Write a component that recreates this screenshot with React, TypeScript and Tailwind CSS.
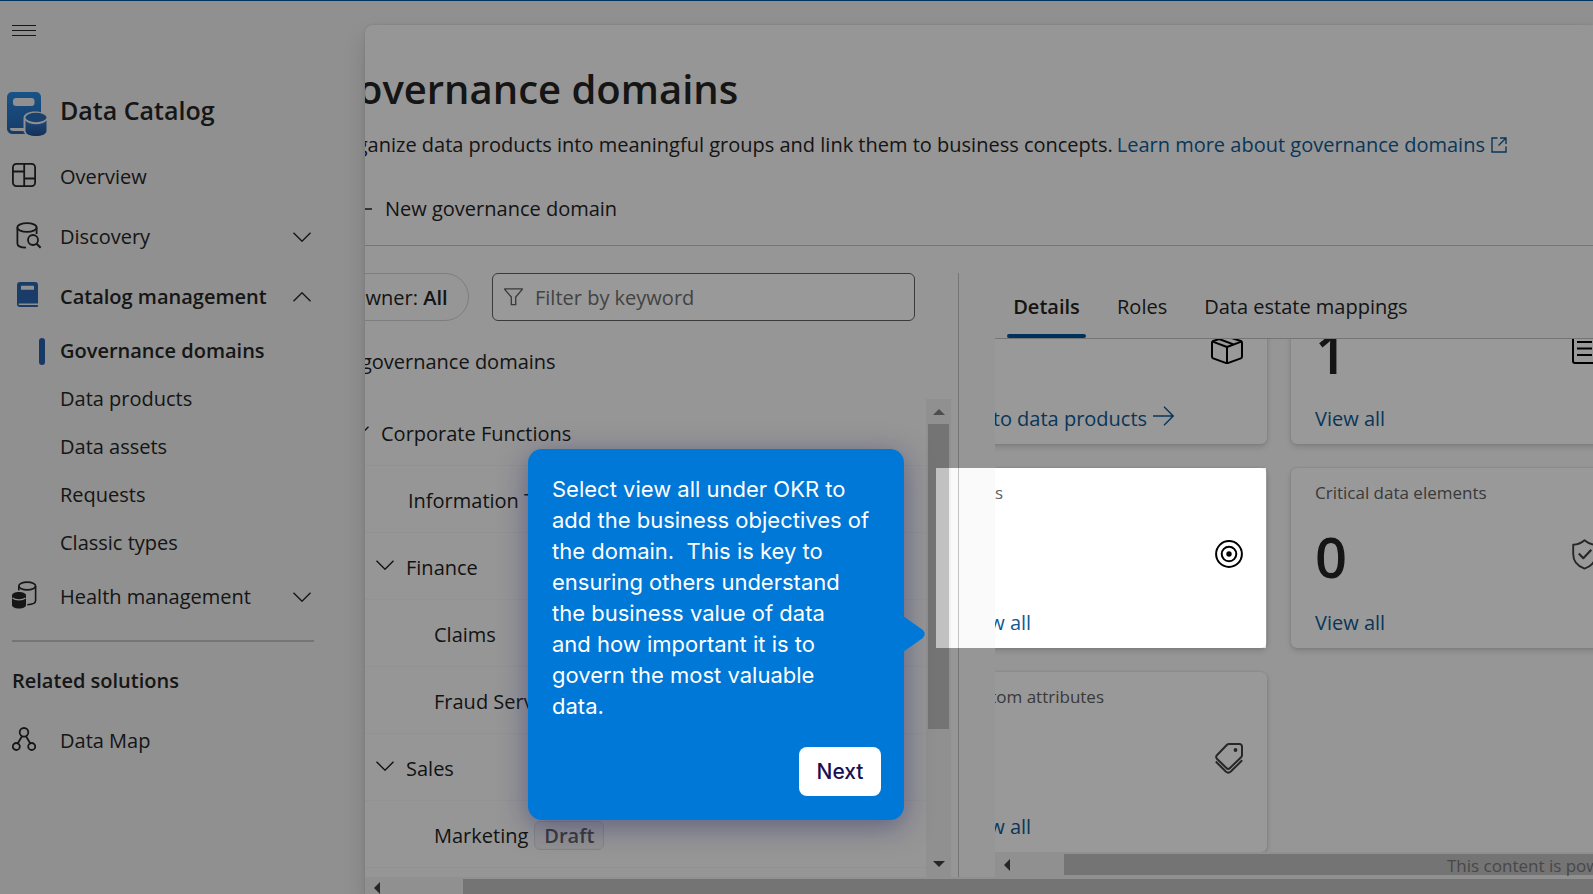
import type { ReactNode } from "react";

const BASE = "text-[20px] leading-7";

function Chevron({ up = false, className = "" }: { up?: boolean; className?: string }) {
  return (
    <svg width="18" height="10" viewBox="0 0 18 10" fill="none" stroke="currentColor" strokeWidth="1.4" className={className} aria-hidden="true">
      <path d={up ? "M0.5 9.3 9 0.8l8.5 8.5" : "M0.5 0.7 9 9.2l8.5-8.5"} />
    </svg>
  );
}

function CatalogLogo() {
  return (
    <svg width="40" height="44" viewBox="0 0 40 44" aria-hidden="true">
      <defs>
        <linearGradient id="book" x1="0" y1="0" x2="0" y2="1">
          <stop offset="0" stopColor="#2a8ae0" />
          <stop offset="1" stopColor="#2765ae" />
        </linearGradient>
        <linearGradient id="drum" x1="0" y1="0" x2="0" y2="1">
          <stop offset="0" stopColor="#3277c8" />
          <stop offset="1" stopColor="#1f5296" />
        </linearGradient>
      </defs>
      <path d="M5 0h24a5 5 0 0 1 5 5v37H6a5.5 5.5 0 0 1-6-6V5a5 5 0 0 1 5-5Z" fill="url(#book)" />
      <path d="M3 36h24v3H6a3 3 0 0 1-3-3Z" fill="#f0f0f0" />
      <rect x="6" y="6" width="21.5" height="8" rx="3" fill="#f0f0f0" />
      <path d="M16.5 26c0-4 5-6.500 11.500-6.500 3 0 5.500.5 7.500 1.300V43H20.500c-2.500-.6-4-2.300-4-4.500Z" fill="#f0f0f0" />
      <ellipse cx="29" cy="25.5" rx="10.5" ry="4.7" fill="#2a6fbd" />
      <path d="M18.5 28.500c2 2.600 6 3.700 10.500 3.700s8.500-1.100 10.500-3.700V39c0 3-4.700 5-10.500 5s-10.500-2-10.500-5Z" fill="url(#drum)" />
    </svg>
  );
}

function OverviewIcon() {
  return (
    <svg width="24" height="24" viewBox="0 0 24 24" fill="none" stroke="currentColor" strokeWidth="1.8" aria-hidden="true">
      <rect x="0.9" y="0.9" width="22.2" height="22.2" rx="3.5" />
      <path d="M12.2 1v22M1 8.500h11.200M12.200 15.500H23" />
    </svg>
  );
}

function DiscoveryIcon() {
  return (
    <svg width="26" height="27" viewBox="0 0 26 27" fill="none" stroke="currentColor" strokeWidth="1.8" aria-hidden="true">
      <ellipse cx="11" cy="5.5" rx="9.6" ry="4.4" />
      <path d="M1.400 5.500v16c0 2.300 3.700 4 8.600 4.200M20.600 5.500v6.500" />
      <circle cx="17" cy="18" r="5" />
      <path d="m20.600 21.700 4 4" strokeWidth="2" />
    </svg>
  );
}

function BookIcon() {
  return (
    <svg width="22" height="26" viewBox="0 0 22 26" aria-hidden="true">
      <path d="M3 0h15a3 3 0 0 1 3 3v18.500H1.800V23H21v1.200A1 1 0 0 1 20 25H3a3 3 0 0 1-3-3V3a3 3 0 0 1 3-3Z" fill="#2a66ae" />
      <rect x="4" y="3.7" width="13" height="4" rx="0.5" fill="#f0f0f0" />
    </svg>
  );
}

function HealthIcon() {
  return (
    <svg width="25" height="28" viewBox="0 0 25 28" fill="none" stroke="currentColor" strokeWidth="1.6" aria-hidden="true">
      <ellipse cx="15.2" cy="5" rx="8.4" ry="3.9" />
      <path d="M6.800 5v4.500M23.600 5v14.500c0 2.500-3 4-8.300 4.200" />
      <path d="M0 14.500C0 12.500 3 11 7 11s7 1.500 7 3.500v9.500c0 2-3 3.500-7 3.500s-7-1.500-7-3.500Z" fill="currentColor" stroke="none" />
      <path d="M.5 17c1.500 1.300 3.700 1.900 6.500 1.900s5-.6 6.500-1.900" stroke="#f0f0f0" strokeWidth="1.2" />
    </svg>
  );
}

function MapIcon() {
  return (
    <svg width="24" height="24" viewBox="0 0 24 24" fill="none" stroke="currentColor" strokeWidth="1.8" aria-hidden="true">
      <circle cx="12" cy="5.3" r="4.3" />
      <circle cx="4.3" cy="19.5" r="3.5" />
      <circle cx="19.7" cy="19.5" r="3.5" />
      <path d="M10 9.200 5.800 16.300M14 9.200l4.200 7.100" />
    </svg>
  );
}

function FunnelIcon() {
  return (
    <svg width="19" height="18" viewBox="0 0 19 18" fill="none" stroke="currentColor" strokeWidth="1.3" className="shrink-0" aria-hidden="true">
      <path d="M.8.8h17.400v.7L11.700 9v7.700H7.300V9L.8 1.500Z" />
    </svg>
  );
}

function TargetIcon() {
  return (
    <svg width="28" height="28" viewBox="0 0 28 28" fill="none" stroke="#000" strokeWidth="2" aria-hidden="true">
      <circle cx="14" cy="14" r="12.9" />
      <circle cx="14" cy="14" r="7.3" />
      <circle cx="14" cy="14" r="2.7" fill="#000" stroke="none" />
    </svg>
  );
}

function BoxIcon() {
  return (
    <svg width="32" height="28" viewBox="0 0 32 28" fill="none" stroke="#000" strokeWidth="2" strokeLinejoin="round" aria-hidden="true">
      <path d="M1 6.800A2 2 0 0 1 2.200 5L14.800.9a4 4 0 0 1 2.400 0L29.800 5A2 2 0 0 1 31 6.800v13.800a2 2 0 0 1-1.200 1.800l-12.400 4.500a4 4 0 0 1-2.800 0L2.200 22.400A2 2 0 0 1 1 20.600Z" />
      <path d="M1.700 5.600 16 11l14.300-5.400M16 11v16M8 3l14.500 5.400" />
    </svg>
  );
}

function ListIcon() {
  return (
    <svg width="25" height="28" viewBox="0 0 25 28" fill="none" stroke="#000" strokeWidth="2" aria-hidden="true">
      <rect x="1" y="1" width="23" height="26" rx="2" />
      <path d="M5 6h15M5 12.500h15M5 19h15" />
    </svg>
  );
}

function ShieldIcon() {
  return (
    <svg width="25" height="31" viewBox="0 0 25 31" fill="none" stroke="currentColor" strokeWidth="1.9" strokeLinejoin="round" aria-hidden="true">
      <path d="M12.500 1.300C9.500 4 5.500 5.700 1.200 5.700V15c0 7 4 12 11.300 14.600C19.800 27 23.800 22 23.800 15V5.700c-4.300 0-8.300-1.700-11.300-4.400Z" />
      <path d="m6.800 14.500 4.500 4.700 8-8.400" strokeWidth="2.2" />
    </svg>
  );
}

function TagIcon() {
  return (
    <svg width="28" height="31" viewBox="0 0 28 31" fill="none" stroke="currentColor" strokeWidth="2" strokeLinejoin="round" aria-hidden="true">
      <path d="M14 1h10.500A2.500 2.500 0 0 1 27 3.500V12a3 3 0 0 1-.9 2.200L15 25a2.600 2.600 0 0 1-3.600 0L1.900 15.700a2.300 2.300 0 0 1 0-3.400L12 1.800A3 3 0 0 1 14 1Z" />
      <path d="M.8 18.500 10.800 28.500a3.700 3.700 0 0 0 5 0L27.200 17.300" />
      <circle cx="20.5" cy="7" r="1.9" fill="currentColor" stroke="none" />
    </svg>
  );
}

function NavRow({ icon, label, bold = false, children }: { icon: ReactNode; label: string; bold?: boolean; children?: ReactNode }) {
  return (
    <a href="#" className="flex h-[60px] items-center pr-[54px]">
      <span className="flex w-[60px] shrink-0 items-center pb-1">{icon}</span>
      <span className={bold ? "flex-1 font-semibold" : "flex-1"}>{label}</span>
      {children}
    </a>
  );
}

function Sidebar() {
  return (
    <nav className="flex w-[365px] shrink-0 flex-col text-[#262626]">
      <button type="button" aria-label="Toggle navigation" className="mt-6 ml-3 flex w-6 flex-col gap-1 self-start">
        <span className="h-px w-full bg-[#262626]" />
        <span className="h-px w-full bg-[#262626]" />
        <span className="h-px w-full bg-[#262626]" />
      </button>
      <div className="mt-10 flex h-[71px] items-center gap-[13px] pt-1 pl-[7px]">
        <CatalogLogo />
        <span className="pb-2 text-[25px] leading-9 font-semibold">Data Catalog</span>
      </div>
      <div className="flex flex-col">
        <NavRow icon={<span className="pl-3"><OverviewIcon /></span>} label="Overview" />
        <NavRow icon={<span className="pl-4"><DiscoveryIcon /></span>} label="Discovery"><Chevron /></NavRow>
        <NavRow bold icon={<span className="pl-[17px]"><BookIcon /></span>} label="Catalog management"><Chevron up /></NavRow>
        {["Governance domains", "Data products", "Data assets", "Requests", "Classic types"].map((label, i) => (
          <a key={label} href="#" className="flex h-12 items-center">
            <span className="flex w-[60px] pl-[39px]">
              {i === 0 && <span className="h-[27px] w-1.5 rounded-full bg-[#2561a8]" />}
            </span>
            <span className={i === 0 ? "font-semibold" : ""}>{label}</span>
          </a>
        ))}
        <NavRow icon={<span className="pl-3"><HealthIcon /></span>} label="Health management"><Chevron /></NavRow>
      </div>
      <hr className="mt-[13px] mr-[51px] ml-3 border-t-2 border-[#c4c4c4]" />
      <h2 className="mt-[25px] ml-3 font-semibold">Related solutions</h2>
      <div className="mt-4">
        <NavRow icon={<span className="pl-3"><MapIcon /></span>} label="Data Map" />
      </div>
    </nav>
  );
}

function TreeRow({ label, pad, chevron = false, badge }: { label: string; pad: string; chevron?: boolean; badge?: string }) {
  return (
    <li className={`flex h-[67px] shrink-0 items-center border-b border-[#f3f3f3] pt-1 ${pad}`}>
      {chevron && <Chevron className="mr-3 mb-1.5" />}
      <span>{label}</span>
      {badge && (
        <span className="mb-0.5 ml-1.5 rounded-md border border-[#dcdce0] bg-[#f2f2f4] px-[9px] leading-[27px] font-semibold text-[#616161]">{badge}</span>
      )}
    </li>
  );
}

function DomainTree() {
  return (
    <section className="flex w-[622px] shrink-0 flex-col">
      <div className="flex shrink-0 items-center justify-between pr-9">
        <button type="button" className="h-12 rounded-full border border-[#d1d1d1] px-5 pt-0.5">
          Owner: <span className="font-semibold">All</span>
        </button>
        <label className="flex h-12 w-[423px] items-center gap-3 rounded-md border border-[#616161] bg-white px-[11px] text-[#616161]">
          <FunnelIcon />
          <input type="text" aria-label="Filter by keyword" placeholder="Filter by keyword" className="w-full min-w-0 bg-transparent pt-0.5 outline-none placeholder:text-[#707070]" />
        </label>
      </div>
      <p className="mt-[27px] shrink-0 pl-1">All governance domains</p>
      <div className="mt-[23px] flex min-h-0 flex-1">
        <ul className="flex min-w-0 flex-1 flex-col overflow-hidden text-[#1f1f1f]">
          <TreeRow chevron pad="pl-[22px]" label="Corporate Functions" />
          <TreeRow pad="pl-[79px]" label="Information Technology" />
          <TreeRow chevron pad="pl-[47px]" label="Finance" />
          <TreeRow pad="pl-[105px]" label="Claims" />
          <TreeRow pad="pl-[105px]" label="Fraud Services" />
          <TreeRow chevron pad="pl-[47px]" label="Sales" />
          <TreeRow pad="pl-[105px]" label="Marketing" badge="Draft" />
        </ul>
        <div className="flex w-[25px] shrink-0 flex-col items-center bg-[#f1f1f1] py-2.5">
          <span className="h-0 w-0 border-x-6 border-b-6 border-x-transparent border-b-[#808080]" />
          <span className="mt-[9px] h-[305px] w-[21px] bg-[#c1c1c1]" />
          <span className="mt-auto h-0 w-0 border-x-6 border-t-6 border-x-transparent border-t-[#404040]" />
        </div>
      </div>
    </section>
  );
}

function Card({ title, value, link, icon, arrow = false }: { title: string; value: string; link: string; icon: ReactNode; arrow?: boolean }) {
  return (
    <article className="flex h-[180px] w-[330px] shrink-0 flex-col rounded-md bg-white px-6 pt-[13px] pb-[11px] shadow-[0_0_3px_rgba(0,0,0,0.12),0_3px_6px_rgba(0,0,0,0.14)]">
      <h3 className="text-[17px] leading-6 text-[#616161]">{title}</h3>
      <div className="flex flex-1 items-center justify-between">
        <span className="pb-0.5 text-[56px] leading-[60px] font-semibold text-[#242424]">{value}</span>
        <span className="pb-1.5 text-[#424242]">{icon}</span>
      </div>
      <a href="#" className="flex items-center gap-1.5 text-[#0f5a94]">
        {link}
        {arrow && (
          <svg width="21" height="20" viewBox="0 0 21 20" fill="none" stroke="currentColor" strokeWidth="1.4" className="mb-1.5" aria-hidden="true">
            <path d="M0 10h20M11 .8l9.200 9.200-9.200 9.200" />
          </svg>
        )}
      </a>
    </article>
  );
}

function DetailsPane() {
  return (
    <section className="ml-9 flex min-w-0 flex-1 flex-col">
      <div role="tablist" className="flex h-[66px] shrink-0 items-stretch gap-[25px] border-b border-[#c4c4c4] pl-3">
        <button type="button" role="tab" aria-selected="true" className="flex flex-col justify-between px-0 pt-5 font-semibold">
          <span className="px-1.5">Details</span>
          <span className="h-1 w-[79px] rounded-sm bg-[#00539a]" />
        </button>
        <button type="button" role="tab" aria-selected="false" className="px-1.5 pt-0.5">Roles</button>
        <button type="button" role="tab" aria-selected="false" className="px-1.5 pt-0.5">Data estate mappings</button>
      </div>
      <div className="flex min-h-0 flex-1 flex-col justify-end overflow-hidden">
        <div className="-ml-[58px] grid w-max grid-cols-[330px_330px] gap-6">
          <Card title="Data products" value="1" link="Go to data products" arrow icon={<BoxIcon />} />
          <Card title="Glossary terms" value="1" link="View all" icon={<ListIcon />} />
          <Card title="OKRs" value="" link="View all" icon={<TargetIcon />} />
          <Card title="Critical data elements" value="0" link="View all" icon={<ShieldIcon />} />
          <Card title="Custom attributes" value="" link="View all" icon={<TagIcon />} />
        </div>
      </div>
      <div className="flex h-[25px] shrink-0 items-center bg-[#f1f1f1] pl-[9px]">
        <span className="h-0 w-0 border-y-6 border-r-6 border-y-transparent border-r-[#404040]" />
        <span className="ml-[54px] h-[21px] flex-1 bg-[#c1c1c1]" />
      </div>
    </section>
  );
}

function Tour() {
  return (
    <>
      <div className="absolute top-[468px] left-[936px] h-[180px] w-[330px] shadow-[0_0_0_2000px_rgba(0,0,0,0.4)]" />
      <div role="dialog" aria-label="Guided tour" className="absolute top-[449px] left-[528px] w-[376px] rounded-[14px] bg-[#0078d7] pt-[25px] pr-[23px] pb-6 pl-6 font-[Inter,sans-serif] text-[22px] leading-[31px] text-white shadow-[0_6px_28px_rgba(40,40,110,0.5)]">
        <p className="whitespace-pre">
          {"Select view all under OKR to\nadd the business objectives of\nthe domain.\u00a0 This is key to\nensuring others understand\nthe business value of data\nand how important it is to\ngovern the most valuable\ndata."}
        </p>
        <div className="mt-[25px] flex justify-end">
          <button type="button" className="h-[49px] w-[82px] rounded-lg bg-white text-[21px] font-medium text-[#1b1052]">Next</button>
        </div>
        <svg width="22" height="36" viewBox="0 0 22 36" className="absolute top-[167px] -right-[21px]" aria-hidden="true">
          <path d="M0 0 19.500 13.800q4.500 4.200 0 8.400L0 36Z" fill="#0078d7" />
        </svg>
      </div>
    </>
  );
}

export default function App() {
  return (
    <div className={`relative flex h-screen flex-col overflow-hidden bg-[#f0f0f0] font-['Open_Sans',sans-serif] ${BASE}`}>
      <div className="h-px shrink-0 bg-[#00599f]" />
      <div className="flex min-h-0 flex-1">
        <Sidebar />
        <main className="mt-6 flex min-w-0 flex-1 flex-col overflow-hidden rounded-tl-lg bg-[#fafafa] text-[#242424] shadow-[0_0_3px_rgba(0,0,0,0.12),0_12px_24px_rgba(0,0,0,0.14)]">
          <div className="-ml-9 flex min-h-0 flex-1 flex-col">
            <header className="flex shrink-0 flex-col border-b border-[#c4c4c4] pt-[37px] whitespace-nowrap">
              <h1 className="text-[40px] leading-[54px] font-semibold">Governance domains</h1>
              <p className="mt-[15px] flex items-center gap-1 pl-1">
                Organize data products into meaningful groups and link them to business concepts.
                <a href="#" className="flex items-center gap-1.5 text-[#0f5a94]">
                  Learn more about governance domains
                  <svg width="16" height="16" viewBox="0 0 16 16" fill="none" stroke="currentColor" strokeWidth="1.4" aria-hidden="true">
                    <path d="M6.500 1H1v14h14V9.500M9 1h6v6M15 1 7.500 8.500" />
                  </svg>
                </a>
              </p>
              <button type="button" className="mt-9 mb-[22px] flex items-center gap-3 self-start pl-[26px]">
                <svg width="18" height="18" viewBox="0 0 18 18" stroke="currentColor" strokeWidth="1.6" aria-hidden="true">
                  <path d="M9 1v16M1 9h16" />
                </svg>
                New governance domain
              </button>
            </header>
            <div className="mt-[27px] flex min-h-0 flex-1">
              <DomainTree />
              <div className="ml-[7px] w-px bg-[#c4c4c4]" />
              <DetailsPane />
            </div>
          </div>
          <div className="flex h-[17px] shrink-0 items-end bg-[#f1f1f1] pl-[9px]">
            <span className="h-[11px] w-0 border-y-6 border-r-6 border-y-transparent border-r-[#404040]" />
            <span className="ml-[83px] h-[15px] flex-1 bg-[#c1c1c1]" />
          </div>
        </main>
      </div>
      <p className="absolute top-[854px] left-[1447px] text-[17px] leading-6 whitespace-nowrap text-[#787878]">This content is powered by</p>
      <Tour />
    </div>
  );
}
